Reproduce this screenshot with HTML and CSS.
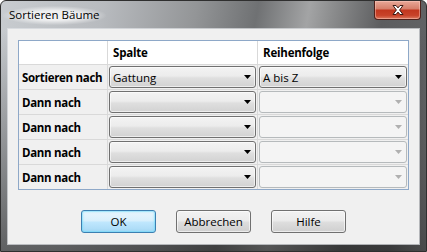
FILE: index.html
```html
<!DOCTYPE html>
<html lang="de">
  <head>
    <meta charset="UTF-8" />
    <title>Sortieren Bäume</title>
    <link rel="stylesheet" href="styles.css">
  </head>
  <body>
    <div class="window">
      <div class="titlebar">
        <span class="title">Sortieren Bäume</span>
        <button class="close-btn" aria-label="Schließen">
          <svg width="12" height="10" viewBox="0 0 12 10">
            <path d="M1 0.5h3l2 2.4 2-2.4h3L7.6 5 11 9.5H8L6 7.1 4 9.5H1L4.4 5z" fill="#fff" stroke="#3b1a14" stroke-width="1" stroke-linejoin="round"/>
          </svg>
        </button>
      </div>

      <div class="client">
        <div class="sort-grid">
          <div class="cell head"></div>
          <div class="cell head">Spalte</div>
          <div class="cell head">Reihenfolge</div>

          <div class="cell label">Sortieren nach</div>
          <div class="cell"><div class="combo">Gattung<svg class="arrow" width="7" height="4"><path d="M0 0h7L3.5 4z"/></svg></div></div>
          <div class="cell"><div class="combo">A bis Z<svg class="arrow" width="7" height="4"><path d="M0 0h7L3.5 4z"/></svg></div></div>

          <div class="cell label">Dann nach</div>
          <div class="cell"><div class="combo"><svg class="arrow" width="7" height="4"><path d="M0 0h7L3.5 4z"/></svg></div></div>
          <div class="cell"><div class="combo disabled"><svg class="arrow" width="7" height="4"><path d="M0 0h7L3.5 4z"/></svg></div></div>

          <div class="cell label">Dann nach</div>
          <div class="cell"><div class="combo"><svg class="arrow" width="7" height="4"><path d="M0 0h7L3.5 4z"/></svg></div></div>
          <div class="cell"><div class="combo disabled"><svg class="arrow" width="7" height="4"><path d="M0 0h7L3.5 4z"/></svg></div></div>

          <div class="cell label">Dann nach</div>
          <div class="cell"><div class="combo"><svg class="arrow" width="7" height="4"><path d="M0 0h7L3.5 4z"/></svg></div></div>
          <div class="cell"><div class="combo disabled"><svg class="arrow" width="7" height="4"><path d="M0 0h7L3.5 4z"/></svg></div></div>

          <div class="cell label">Dann nach</div>
          <div class="cell"><div class="combo"><svg class="arrow" width="7" height="4"><path d="M0 0h7L3.5 4z"/></svg></div></div>
          <div class="cell"><div class="combo disabled"><svg class="arrow" width="7" height="4"><path d="M0 0h7L3.5 4z"/></svg></div></div>
        </div>

        <div class="buttons">
          <button class="btn default">OK</button>
          <button class="btn">Abbrechen</button>
          <button class="btn">Hilfe</button>
        </div>
      </div>
    </div>
  </body>
</html>
```

FILE: styles.css
```css
body {
  margin: 0;
  font-family: "Open Sans", "Noto Sans", sans-serif;
  font-size: 11.5px;
  color: #000;
  background: #fff;
}

.window {
  width: 427px;
  height: 252px;
  box-sizing: border-box;
  border: 1px solid #2f2f2f;
  border-radius: 6px 6px 0 0;
  display: flex;
  flex-direction: column;
  background:
    linear-gradient(to bottom, rgba(30, 30, 30, 0) 0, rgba(30, 30, 30, 0) 28px, rgba(30, 30, 30, 0.6) 100%),
    linear-gradient(100deg, #c8ccd0 0%, #b8bbbf 22%, #939597 42%, #6f7173 55%, #a3a4a5 66%, #8c8d8e 71%, #5c5d5f 82%, #616264 92%, #8e8f91 100%);
  overflow: hidden;
}

.titlebar {
  height: 28px;
  display: flex;
  align-items: flex-start;
  justify-content: space-between;
  flex-shrink: 0;
}

.title {
  margin: 5px 0 0 2px;
  padding: 1px 6px 3px 6px;
  font-size: 11.5px;
  color: #000;
  background: radial-gradient(ellipse at center, rgba(255, 255, 255, 0.75) 35%, rgba(255, 255, 255, 0) 72%);
}

.close-btn {
  width: 47px;
  height: 19px;
  margin-right: 5px;
  padding: 0;
  border: 1px solid #50201a;
  border-top: none;
  border-radius: 0 0 4px 4px;
  background: linear-gradient(#e8a898 0%, #d6806c 42%, #c2371f 52%, #c8432a 80%, #dc7a60 100%);
  box-shadow: inset 0 0 0 1px rgba(255, 210, 200, 0.45);
  display: flex;
  align-items: center;
  justify-content: center;
}

.client {
  flex: 1;
  margin: 0 7px 7px 7px;
  background: #f0f0f0;
  box-shadow: 0 0 0 1px rgba(225, 228, 232, 0.7);
  padding: 11px 10px 0 10px;
}

.sort-grid {
  display: grid;
  grid-template-columns: 88px 149px 150px;
  grid-template-rows: 23px repeat(5, 24px);
  gap: 1px;
  background: #d9d9d9;
  border: 1px solid #8ea8c8;
}

.cell {
  background: #f0f0f0;
  padding: 1px;
  display: flex;
  align-items: center;
  white-space: nowrap;
}

.head {
  background: #fff;
  font-weight: bold;
  letter-spacing: -0.2px;
  padding-left: 5px;
}

.label {
  font-weight: bold;
  letter-spacing: -0.3px;
  padding-left: 3px;
}

.combo {
  flex: 1;
  height: 22px;
  box-sizing: border-box;
  border: 1px solid #707070;
  border-radius: 3px;
  background: linear-gradient(#f3f3f3 0%, #ececec 45%, #dfdfdf 55%, #d2d2d2 100%);
  box-shadow: inset 0 0 0 1px rgba(255, 255, 255, 0.6);
  display: flex;
  align-items: center;
  padding: 0 4px 0 3px;
}

.combo .arrow {
  margin-left: auto;
  fill: #000;
}

.combo.disabled {
  border-color: #b6babc;
  background: #f4f4f4;
  box-shadow: none;
}

.combo.disabled .arrow {
  fill: #b0b0b0;
}

.buttons {
  display: flex;
  justify-content: center;
  gap: 20px;
  margin-top: 20px;
}

.btn {
  width: 75px;
  height: 23px;
  padding: 0;
  border: 1px solid #707070;
  border-radius: 3px;
  background: linear-gradient(#f2f2f2 0%, #ebebeb 45%, #dddddd 55%, #cfcfcf 100%);
  box-shadow: inset 0 0 0 1px rgba(255, 255, 255, 0.6);
  font-family: inherit;
  font-size: 11.5px;
  color: #000;
}

.btn.default {
  border-color: #3c7fb1;
  background: linear-gradient(#eaf6fd 0%, #d9f0fc 45%, #bee6fd 55%, #a7d9f5 100%);
  box-shadow: inset 0 0 0 1px #48d7fb33, inset 0 0 2px 1px rgba(120, 220, 250, 0.5);
}
```
